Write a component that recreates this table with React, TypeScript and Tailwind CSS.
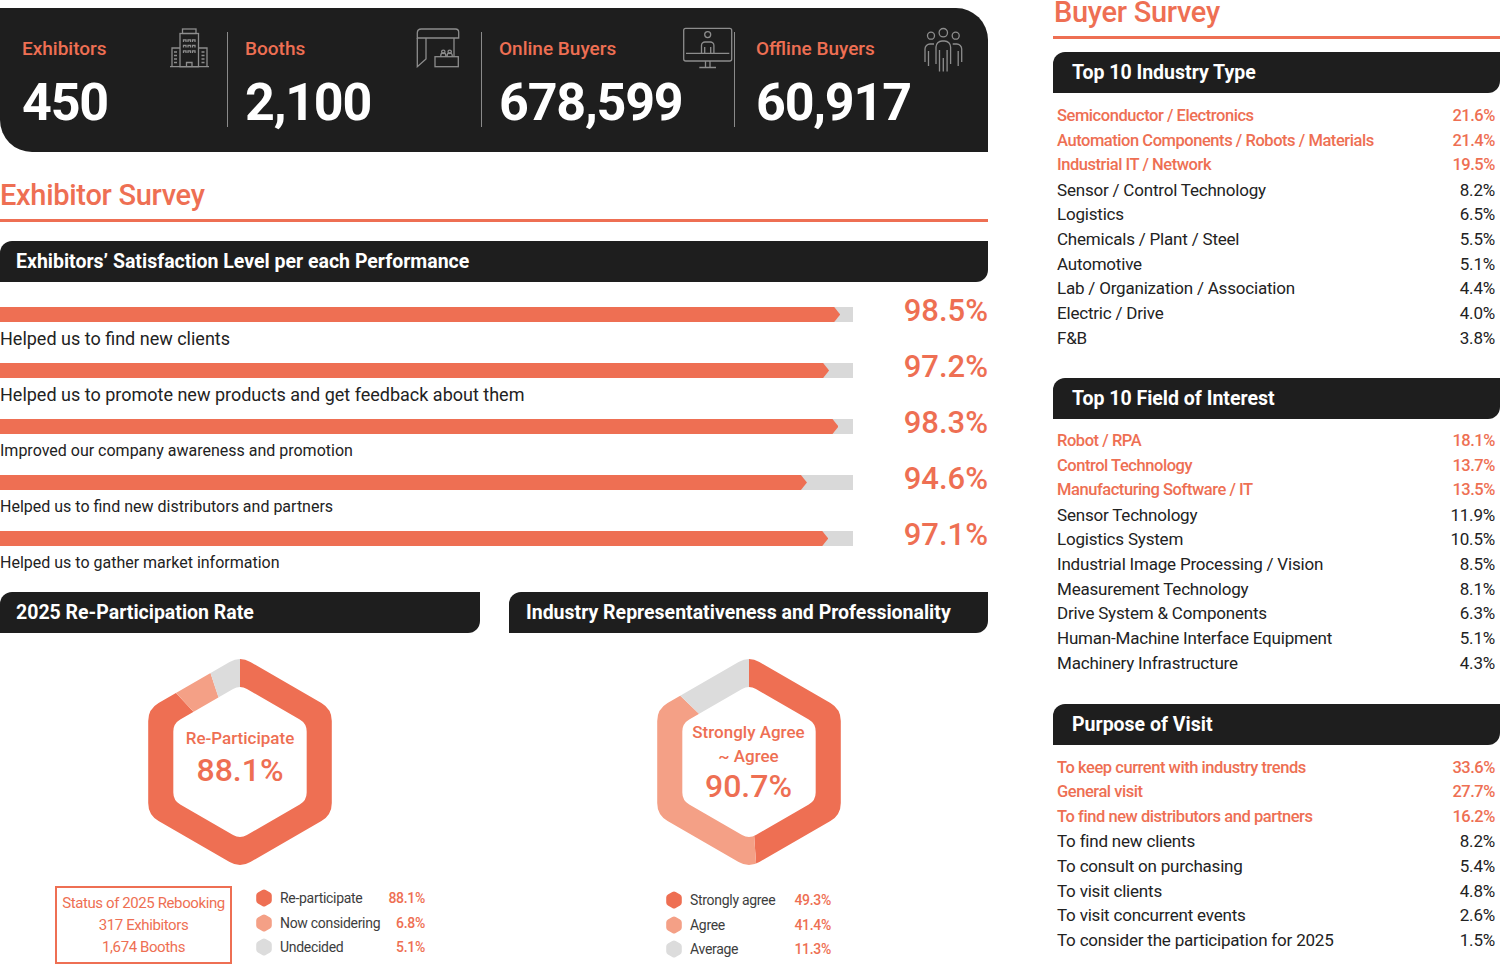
import React from "react"

const ORANGE = "#ee6f53"
const SALMON = "#f4a086"
const GRAY = "#dcdcdc"

const performance = [
  { label: "Helped us to find new clients", value: 98.5, big: true },
  { label: "Helped us to promote new products and get feedback about them", value: 97.2, big: true },
  { label: "Improved our company awareness and promotion", value: 98.3, big: false },
  { label: "Helped us to find new distributors and partners", value: 94.6, big: false },
  { label: "Helped us to gather market information", value: 97.1, big: false },
]

const industryType = [
  ["Semiconductor / Electronics", "21.6%"],
  ["Automation Components / Robots / Materials", "21.4%"],
  ["Industrial IT / Network", "19.5%"],
  ["Sensor / Control Technology", "8.2%"],
  ["Logistics", "6.5%"],
  ["Chemicals / Plant / Steel", "5.5%"],
  ["Automotive", "5.1%"],
  ["Lab / Organization / Association", "4.4%"],
  ["Electric / Drive", "4.0%"],
  ["F&B", "3.8%"],
]

const fieldOfInterest = [
  ["Robot / RPA", "18.1%"],
  ["Control Technology", "13.7%"],
  ["Manufacturing Software / IT", "13.5%"],
  ["Sensor Technology", "11.9%"],
  ["Logistics System", "10.5%"],
  ["Industrial Image Processing / Vision", "8.5%"],
  ["Measurement Technology", "8.1%"],
  ["Drive System & Components", "6.3%"],
  ["Human-Machine Interface Equipment", "5.1%"],
  ["Machinery Infrastructure", "4.3%"],
]

const purpose = [
  ["To keep current with industry trends", "33.6%"],
  ["General visit", "27.7%"],
  ["To find new distributors and partners", "16.2%"],
  ["To find new clients", "8.2%"],
  ["To consult on purchasing", "5.4%"],
  ["To visit clients", "4.8%"],
  ["To visit concurrent events", "2.6%"],
  ["To consider the participation for 2025", "1.5%"],
]

// rounded pointy-top hexagon
function hexPath(R: number, r: number) {
  const pts = [0, 1, 2, 3, 4, 5].map((i) => {
    const a = ((-90 + 60 * i) * Math.PI) / 180
    return [R * Math.cos(a), R * Math.sin(a)]
  })
  let d = ""
  pts.forEach((p, i) => {
    const prev = pts[(i + 5) % 6]
    const next = pts[(i + 1) % 6]
    const p1 = [p[0] + ((prev[0] - p[0]) * r) / R, p[1] + ((prev[1] - p[1]) * r) / R]
    const p2 = [p[0] + ((next[0] - p[0]) * r) / R, p[1] + ((next[1] - p[1]) * r) / R]
    d += `${i === 0 ? "M" : "L"}${p1[0].toFixed(2)},${p1[1].toFixed(2)} Q${p[0].toFixed(2)},${p[1].toFixed(2)} ${p2[0].toFixed(2)},${p2[1].toFixed(2)} `
  })
  return d + "Z"
}

function wedge(a0: number, a1: number) {
  const R = 160
  const pt = (a: number) => {
    const t = (a * Math.PI) / 180
    return `${(R * Math.sin(t)).toFixed(2)},${(-R * Math.cos(t)).toFixed(2)}`
  }
  const large = a1 - a0 > 180 ? 1 : 0
  return `M0,0 L${pt(a0)} A${R},${R} 0 ${large} 1 ${pt(a1)} Z`
}

function HexDonut({ id, segs }: { id: string; segs: { v: number; c: string }[] }) {
  const total = segs.reduce((s, x) => s + x.v, 0)
  let start = 0
  return (
    <svg width="220" height="220" viewBox="-110 -110 220 220" className="absolute inset-0">
      <defs>
        <clipPath id={id}>
          <path d={hexPath(106, 12) + " " + hexPath(77, 8)} clipRule="evenodd" />
        </clipPath>
      </defs>
      <g clipPath={`url(#${id})`}>
        {segs.map((s, i) => {
          const a0 = start
          const a1 = start + (s.v / total) * 360
          start = a1
          return <path key={i} d={wedge(a0, a1)} fill={s.c} />
        })}
      </g>
    </svg>
  )
}

function HexDot({ color }: { color: string }) {
  return (
    <svg width="16" height="18" viewBox="-8 -9 16 18">
      <path d={hexPath(9, 2)} fill={color} />
    </svg>
  )
}

function TitleBar({ children, className = "" }: { children: React.ReactNode; className?: string }) {
  return (
    <div className={`h-[41px] shrink-0 bg-[#1e1e1e] rounded-tl-[12px] rounded-br-[12px] flex items-center text-white font-bold text-[19.5px] ${className}`}>
      {children}
    </div>
  )
}

function BuildingIcon() {
  const wins: React.ReactNode[] = []
  ;[19, 24.5, 30].forEach((y) =>
    [24.5, 29, 33.5].forEach((x) => wins.push(<path key={`${x}-${y}`} d={`M${x} ${y + 3}V${y + 0.8}h2.5V${y + 3}`} />))
  )
  return (
    <svg width="41" height="40" viewBox="10 8 41 40" fill="none" stroke="#8d8d8d" strokeWidth="1.3">
      <rect x="23.5" y="9" width="13.5" height="4.5" />
      <rect x="21" y="13.5" width="18.5" height="33.2" />
      <path d="M21 28H13V46.7M39.5 28H48V46.7M11 46.7H50" />
      {wins}
      <path d="M15 32h3M15 35.5h3M15 39h3M15 42.5h3M42.5 32h3M42.5 35.5h3M42.5 39h3M42.5 42.5h3" />
      <path d="M27.5 46.7V42.5H33V46.7" />
    </svg>
  )
}

function BoothIcon() {
  return (
    <svg width="44" height="40" viewBox="6 8 44 40" fill="none" stroke="#8d8d8d" strokeWidth="1.3">
      <path d="M7.3 18V13Q7.3 9 11.3 9H45.5Q48.7 9 48.7 12.2V18Z" />
      <path d="M7.3 18V46.7L16 39V18" />
      <path d="M44 18V36.7" />
      <rect x="25" y="36.7" width="23.3" height="10" />
      <circle cx="33.3" cy="31.8" r="1.7" />
      <circle cx="39.7" cy="31.8" r="1.7" />
      <path d="M30.8 36.7v-1.3a2.5 2.5 0 0 1 5 0v1.3M37.2 36.7v-1.3a2.5 2.5 0 0 1 5 0v1.3" />
    </svg>
  )
}

function MonitorIcon() {
  return (
    <svg width="52" height="43" viewBox="6 2 52 43" fill="none" stroke="#8d8d8d" strokeWidth="1.3">
      <rect x="7.7" y="3.3" width="48" height="32.7" rx="2" />
      <path d="M10 28.3H53.3" />
      <circle cx="31.7" cy="9.6" r="3" />
      <path d="M25.5 28.3V20.5a3.5 3.5 0 0 1 3.5-3.5h5.4a3.5 3.5 0 0 1 3.5 3.5V28.3" />
      <path d="M28.7 22V28.3M34.7 22V28.3" />
      <path d="M29.5 36V42.5M34 36V42.5M23.3 42.5H40" />
    </svg>
  )
}

function PeopleIcon() {
  return (
    <svg width="41" height="46" viewBox="13 7 41 46" fill="none" stroke="#8d8d8d" strokeWidth="1.3">
      <circle cx="33.3" cy="12.7" r="4.2" />
      <circle cx="21" cy="15.7" r="3.5" />
      <circle cx="45.7" cy="15.7" r="3.5" />
      <path d="M26 44V27a6 6 0 0 1 6-6h2.6a6 6 0 0 1 6 6V44" />
      <path d="M29.5 30V51.5M37.1 30V51.5M33.3 38V51.5" />
      <path d="M15 42V29a5 5 0 0 1 5-5h4M18.5 31V46" />
      <path d="M51.7 42V29a5 5 0 0 0-5-5h-4M48.2 31V46" />
    </svg>
  )
}

function Stat({ label, value, icon, className, iconClass }: { label: string; value: string; icon: React.ReactNode; className: string; iconClass: string }) {
  return (
    <div className={`flex items-start justify-between ${className}`}>
      <div className="pt-[29px]">
        <div className="text-[19px] leading-[24px] font-medium text-[#ee6f53]">{label}</div>
        <div className="mt-[16px] text-[52px] leading-[52px] font-bold tracking-[-1.2px] text-white">{value}</div>
      </div>
      <div className={iconClass}>{icon}</div>
    </div>
  )
}

function Divider() {
  return <div className="w-px h-[95px] mt-[24px] bg-[#8a8a8a]" />
}

function ListBlock({ rows, highlight }: { rows: string[][]; highlight: number }) {
  return (
    <div className="pl-[4px] pr-[5px]">
      {rows.map(([k, v], i) => (
        <div
          key={k}
          className={`flex justify-between items-center h-[24.7px] whitespace-nowrap ${
            i < highlight ? "text-[#ee6f53] font-medium text-[16.5px] tracking-[-0.45px]" : "text-[#222] text-[17px] tracking-[-0.2px]"
          }`}
        >
          <span>{k}</span>
          <span>{v}</span>
        </div>
      ))}
    </div>
  )
}

function Legend({ rows, cols }: { rows: [string, string, string][]; cols: string }) {
  return (
    <div className={`grid ${cols} gap-x-[8px] items-center text-[14px] tracking-[-0.3px] leading-[24.5px] whitespace-nowrap`}>
      {rows.map(([c, k, v]) => (
        <React.Fragment key={k}>
          <HexDot color={c} />
          <span className="text-[#3d3d3d]">{k}</span>
          <span className="text-right font-medium text-[#ee6f53]">{v}</span>
        </React.Fragment>
      ))}
    </div>
  )
}

export default function App() {
  return (
    <div className="w-[1500px] h-[965px] overflow-hidden bg-white flex font-['Roboto',sans-serif]">
      {/* left: exhibitor survey */}
      <div className="w-[988px] pt-[8px] flex flex-col *:shrink-0">
        <div className="h-[144px] bg-[#1e1e1e] rounded-tr-[32px] rounded-bl-[32px] flex">
          <Stat label="Exhibitors" value="450" icon={<BuildingIcon />} className="w-[227px] pl-[22px] pr-[17px]" iconClass="mt-[20px]" />
          <Divider />
          <Stat label="Booths" value="2,100" icon={<BoothIcon />} className="w-[253px] pl-[17px] pr-[21px]" iconClass="mt-[20px]" />
          <Divider />
          <Stat label="Online Buyers" value="678,599" icon={<MonitorIcon />} className="w-[252px] pl-[17px] pr-[16px]" iconClass="mt-[19px]" />
          <Divider />
          <Stat label="Offline Buyers" value="60,917" icon={<PeopleIcon />} className="flex-1 pl-[21px] pr-[24px]" iconClass="mt-[19px]" />
        </div>

        <h2 className="mt-[25px] text-[29px] leading-[36px] font-medium tracking-[-0.3px] text-[#ee6f53]">Exhibitor Survey</h2>
        <div className="mt-[6px] h-[3px] bg-[#ee6f53]" />

        <TitleBar className="mt-[19px] pl-[16px]">Exhibitors’ Satisfaction Level per each Performance</TitleBar>

        <div className="mt-[25px] flex flex-col gap-[13px]">
          {performance.map((p) => (
            <div key={p.label} className="flex items-start justify-between">
              <div className="w-[853px]">
                <div className="h-[15px] bg-[#d9d9d9]">
                  <div
                    className="h-full bg-[#ee6f53] [clip-path:polygon(0_0,calc(100%_-_6px)_0,100%_50%,calc(100%_-_6px)_100%,0_100%)]"
                    style={{ width: `${p.value}%` }}
                  />
                </div>
                <p className={`mt-[6px] leading-[22px] text-[#222] ${p.big ? "text-[18px]" : "text-[16px]"}`}>{p.label}</p>
              </div>
              <span className="-mt-[12px] text-[31px] leading-[32px] font-medium text-[#ee6f53]">{p.value}%</span>
            </div>
          ))}
        </div>

        <div className="mt-[18px] flex gap-[29px]">
          <div className="w-[480px] flex flex-col">
            <TitleBar className="pl-[16px]">2025 Re-Participation Rate</TitleBar>
            <div className="relative mx-auto mt-[19px] w-[220px] h-[220px]">
              <HexDonut
                id="rp"
                segs={[
                  { v: 88.1, c: ORANGE },
                  { v: 6.8, c: SALMON },
                  { v: 5.1, c: GRAY },
                ]}
              />
              <div className="absolute inset-0 flex flex-col items-center pt-[75px] text-[#ee6f53] font-medium">
                <span className="text-[17px] leading-[22px]">Re-Participate</span>
                <span className="mt-[3px] text-[32px] leading-[36px]">88.1%</span>
              </div>
            </div>
            <div className="mt-[14px] flex justify-center items-start gap-[24px]">
              <div className="w-[177px] h-[78px] border-2 border-[#ee6f53] flex flex-col items-center justify-center text-[15px] leading-[22px] tracking-[-0.4px] text-[#ee6f53]">
                <span>Status of 2025 Rebooking</span>
                <span>317 Exhibitors</span>
                <span>1,674 Booths</span>
              </div>
              <Legend
                cols="grid-cols-[16px_98px_39px]"
                rows={[
                  [ORANGE, "Re-participate", "88.1%"],
                  [SALMON, "Now considering", "6.8%"],
                  [GRAY, "Undecided", "5.1%"],
                ]}
              />
            </div>
          </div>

          <div className="w-[479px] flex flex-col">
            <TitleBar className="pl-[17px]">Industry Representativeness and Professionality</TitleBar>
            <div className="relative mx-auto mt-[19px] w-[220px] h-[220px]">
              <HexDonut
                id="ir"
                segs={[
                  { v: 176, c: ORANGE },
                  { v: 138, c: SALMON },
                  { v: 46, c: GRAY },
                ]}
              />
              <div className="absolute inset-0 flex flex-col items-center pt-[69px] text-[#ee6f53] font-medium">
                <span className="text-[17px] leading-[22px]">Strongly Agree</span>
                <span className="mt-[2px] text-[17px] leading-[22px]">~ Agree</span>
                <span className="mt-[1px] text-[32px] leading-[36px]">90.7%</span>
              </div>
            </div>
            <div className="mt-[16px] flex justify-center">
              <Legend
                cols="grid-cols-[16px_92px_41px]"
                rows={[
                  [ORANGE, "Strongly agree", "49.3%"],
                  [SALMON, "Agree", "41.4%"],
                  [GRAY, "Average", "11.3%"],
                ]}
              />
            </div>
          </div>
        </div>
      </div>

      {/* right: buyer survey */}
      <div className="ml-[65px] w-[447px] flex flex-col *:shrink-0">
        <h2 className="-mt-[6px] text-[29px] leading-[36px] font-medium tracking-[-0.3px] text-[#ee6f53] pl-[1px]">Buyer Survey</h2>
        <div className="mt-[6px] h-[3px] bg-[#ee6f53]" />

        <TitleBar className="mt-[13px] pl-[19px]">Top 10 Industry Type</TitleBar>
        <div className="mt-[11px]">
          <ListBlock rows={industryType} highlight={3} />
        </div>

        <TitleBar className="mt-[27px] pl-[19px]">Top 10 Field of Interest</TitleBar>
        <div className="mt-[10px]">
          <ListBlock rows={fieldOfInterest} highlight={3} />
        </div>

        <TitleBar className="mt-[28px] pl-[19px]">Purpose of Visit</TitleBar>
        <div className="mt-[11px]">
          <ListBlock rows={purpose} highlight={3} />
        </div>
      </div>
    </div>
  )
}
